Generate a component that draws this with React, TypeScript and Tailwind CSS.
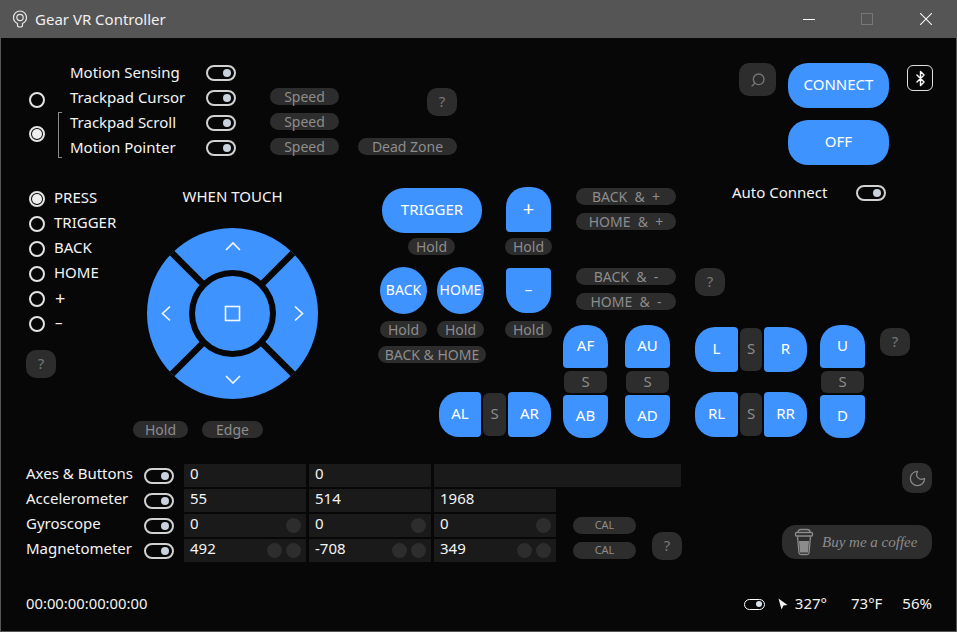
import { Bluetooth, Moon, Search } from 'lucide-react'
import type { ReactNode } from 'react'

const blue = 'bg-[#3f93ff] text-white flex items-center justify-center shrink-0 pb-[2px]'
const pill = 'bg-[#2d2d2d] text-[#8c8c8c] flex items-center justify-center rounded-full h-[17px] text-[14px] whitespace-pre shrink-0 pb-px'
const helpBtn = 'bg-[#2d2d2d] text-[#777] flex items-center justify-center rounded-[10px] w-[30px] h-[28px] text-[15px] shrink-0 pb-[2px]'
const sBtn = 'bg-[#2d2d2d] text-[#8c8c8c] rounded-[6px] flex items-center justify-center pb-[2px]'

function Toggle() {
  return (
    <div className="w-[30px] h-[16px] rounded-full border-2 border-[#d2d2d2] flex items-center justify-end pr-[3px] shrink-0">
      <div className="w-[8px] h-[8px] rounded-full bg-[#c9d2dc]" />
    </div>
  )
}

function Radio({ on }: { on?: boolean }) {
  return (
    <div className="w-[16px] h-[16px] rounded-full border-2 border-[#e4e4e4] flex items-center justify-center shrink-0">
      {on && <div className="w-[10px] h-[10px] rounded-full bg-[#eeeeee]" />}
    </div>
  )
}

function Dpad() {
  return (
    <svg width="171" height="171" viewBox="0 0 171 171" className="block">
      <circle cx="85.5" cy="85.5" r="85.5" fill="#3f93ff" />
      <path d="M25 25 L146 146 M146 25 L25 146" stroke="#070707" strokeWidth="6.5" />
      <circle cx="85.5" cy="85.5" r="43.5" fill="#070707" />
      <circle cx="85.5" cy="85.5" r="37.5" fill="#3f93ff" />
      <g fill="none" stroke="#f4f8ff" strokeWidth="1.6">
        <path d="M79 22 L86 15 L93 22" />
        <path d="M79 148 L86 155 L93 148" />
        <path d="M23 78.5 L15.5 85.5 L23 92.5" />
        <path d="M148 78.5 L155.5 85.5 L148 92.5" />
        <rect x="78.5" y="78.5" width="14" height="14" />
      </g>
    </svg>
  )
}

function Bulb() {
  return (
    <svg width="16" height="18" viewBox="0 0 16 18" fill="none" stroke="#e6e6e6" strokeWidth="1.2" className="shrink-0">
      <path d="M5.5 13.5 C3 12.2 1.5 10 1.5 7.5 A6.5 6.5 0 0 1 14.5 7.5 C14.5 10 13 12.2 10.5 13.5 L10.5 15.5 Q10.5 17 8 17 Q5.5 17 5.5 15.5 Z" />
      <circle cx="8" cy="7.5" r="3.2" />
    </svg>
  )
}

function CoffeeCup() {
  return (
    <svg width="20" height="28" viewBox="0 0 20 28" fill="none" stroke="#8c8c8c" strokeWidth="1.3" className="shrink-0">
      <path d="M4 4 Q4 1.5 7 1.5 L13 1.5 Q16 1.5 16 4" />
      <rect x="1.5" y="4.5" width="17" height="3.5" rx="1" />
      <path d="M3.5 8.5 L5 25 Q5.2 26.5 7 26.5 L13 26.5 Q14.8 26.5 15 25 L16.5 8.5" />
      <path d="M5 13 L15 13 L14 24.5 L6 24.5 Z" fill="#8c8c8c" stroke="none" />
    </svg>
  )
}

function MotionRow({ label, children }: { label: string; children?: ReactNode }) {
  return (
    <div className="flex items-center h-[25px]">
      <span className="w-[136px]">{label}</span>
      <Toggle />
      {children}
    </div>
  )
}

function Cell({ value, dots = 0, wide }: { value: string; dots?: number; wide?: boolean }) {
  return (
    <div className={`bg-[#1a1a1a] h-[23px] flex items-center pl-[6px] pr-[5px] gap-[4px] ${wide ? 'w-[247px]' : 'w-[122px]'}`}>
      <span className="mr-auto pb-[4px]">{value}</span>
      {dots > 1 && <div className="w-[15px] h-[15px] rounded-full bg-[#2d2d2d]" />}
      {dots > 0 && <div className="w-[15px] h-[15px] rounded-full bg-[#2d2d2d]" />}
    </div>
  )
}

function SensorRow({ label, children }: { label: string; children: ReactNode }) {
  return (
    <div className="flex items-center h-[23px]">
      <span className="w-[118px] pb-[4px]">{label}</span>
      <Toggle />
      <div className="flex gap-[3px] ml-[10px]">{children}</div>
    </div>
  )
}

export default function App() {
  return (
    <div className="w-[957px] h-[632px] flex flex-col overflow-hidden bg-[#070707] text-[#f4f4f4] text-[15px] font-['Noto_Sans',sans-serif]">
      {/* Title bar */}
      <div className="h-[38px] bg-[#555555] flex items-center shrink-0">
        <div className="ml-[12px] mr-[7px]"><Bulb /></div>
        <span className="text-[#f0f0f0]">Gear VR Controller</span>
        <div className="ml-auto flex items-center mr-[25px]">
          <div className="w-[12px] h-px bg-white" />
          <div className="w-[12px] h-[12px] border border-[#777] ml-[46px]" />
          <svg width="12" height="12" viewBox="0 0 12 12" stroke="#f4f4f4" strokeWidth="1.1" className="ml-[47px]">
            <path d="M0 0 L12 12 M12 0 L0 12" />
          </svg>
        </div>
      </div>

      <div className="flex-1 flex flex-col border-x border-b border-[#555555] pl-[25px] pt-[22px]">
        <div className="flex">
          {/* Main column */}
          <div className="w-[655px] flex flex-col shrink-0">
            {/* Mode switches */}
            <div className="flex h-[100px]">
              <div className="w-[32px] flex flex-col">
                <div className="h-[25px]" />
                <div className="h-[25px] flex items-center pl-[3px] pt-[4px]"><Radio /></div>
                <div className="h-[50px] flex items-center pl-[3px] pb-[2px]"><Radio on /></div>
              </div>
              <div className="w-[12px] flex flex-col">
                <div className="h-[52px]" />
                <div className="w-[4px] h-[46px] border-y border-l border-[#8a8a8a]" />
              </div>
              <div className="flex flex-col">
                <MotionRow label="Motion Sensing" />
                <MotionRow label="Trackpad Cursor">
                  <div className={`${pill} w-[69px] ml-[34px] -mt-[2px]`}>Speed</div>
                  <div className={`${helpBtn} ml-[88px] mt-[9px]`}>?</div>
                </MotionRow>
                <MotionRow label="Trackpad Scroll">
                  <div className={`${pill} w-[69px] ml-[34px] -mt-[2px]`}>Speed</div>
                </MotionRow>
                <MotionRow label="Motion Pointer">
                  <div className={`${pill} w-[69px] ml-[34px] -mt-[2px]`}>Speed</div>
                  <div className={`${pill} w-[99px] ml-[19px] -mt-[2px]`}>Dead Zone</div>
                </MotionRow>
              </div>
            </div>

            {/* Controller area */}
            <div className="flex mt-[27px]">
              <div className="w-[107px] shrink-0 -mt-px flex flex-col">
                {['PRESS', 'TRIGGER', 'BACK', 'HOME', '+', '–'].map((label, i) => (
                  <div key={label} className="h-[25px] flex items-center pl-[3px]">
                    <Radio on={i === 0} />
                    <span className={`ml-[9px] pb-[2px] ${i === 4 ? 'pl-[1px] text-[18px] leading-[20px]' : ''} ${i === 5 ? 'pl-[1px]' : ''}`}>{label}</span>
                  </div>
                ))}
                <div className={`${helpBtn} mt-[14px]`}>?</div>
              </div>

              <div className="w-[185px] shrink-0 flex flex-col">
                <div className="w-[171px] ml-[14px] h-[20px] flex items-center justify-center pb-[2px]">WHEN TOUCH</div>
                <div className="ml-[14px] mt-[21px]"><Dpad /></div>
                <div className="flex gap-[14px] mt-[22px]">
                  <div className={`${pill} w-[55px]`}>Hold</div>
                  <div className={`${pill} w-[61px]`}>Edge</div>
                </div>
              </div>

              {/* Button map */}
              <div className="ml-[60px] w-[178px] shrink-0 flex flex-col">
                <div className="flex">
                  <div className="w-[110px] flex flex-col shrink-0">
                    <div className={`${blue} w-[100px] h-[45px] ml-[4px] mt-px rounded-[22px]`}>TRIGGER</div>
                    <div className={`${pill} w-[47px] ml-[30px] mt-[5px]`}>Hold</div>
                    <div className="flex gap-[10px] ml-[2px] mt-[12px]">
                      <div className={`${blue} w-[47px] h-[47px] rounded-full text-[14px]`}>BACK</div>
                      <div className={`${blue} w-[47px] h-[47px] rounded-full text-[14px]`}>HOME</div>
                    </div>
                    <div className="flex gap-[10px] ml-[2px] mt-[7px]">
                      <div className={`${pill} w-[47px]`}>Hold</div>
                      <div className={`${pill} w-[47px]`}>Hold</div>
                    </div>
                    <div className={`${pill} w-[108px] mt-[8px]`}>BACK &amp; HOME</div>
                  </div>
                  <div className="flex flex-col ml-[17px]">
                    <div className={`${blue} w-[45px] h-[45px] ml-px rounded-t-[20px] rounded-b-[4px] text-[20px]`}>+</div>
                    <div className={`${pill} w-[47px] mt-[6px]`}>Hold</div>
                    <div className={`${blue} w-[45px] h-[45px] ml-px mt-[13px] rounded-t-[4px] rounded-b-[20px]`}>–</div>
                    <div className={`${pill} w-[47px] mt-[8px]`}>Hold</div>
                  </div>
                </div>
                <div className="flex ml-[61px] mt-[29px] gap-[2px]">
                  <div className={`${blue} w-[42px] h-[45px] rounded-l-[20px] rounded-r-[4px]`}>AL</div>
                  <div className={`${sBtn} w-[23px] h-[43px] my-px`}>S</div>
                  <div className={`${blue} w-[43px] h-[45px] rounded-r-[20px] rounded-l-[4px]`}>AR</div>
                </div>
              </div>

              <div className="flex flex-col w-[125px] shrink-0">
                <div className={`${pill} w-[100px] ml-[20px] mt-px`}>BACK  &amp;  +</div>
                <div className={`${pill} w-[100px] ml-[20px] mt-[8px]`}>HOME  &amp;  +</div>
                <div className={`${pill} w-[100px] ml-[20px] mt-[38px]`}>BACK  &amp;  -</div>
                <div className={`${pill} w-[100px] ml-[20px] mt-[8px]`}>HOME  &amp;  -</div>
                <div className="flex ml-[7px] mt-[15px] gap-[17px]">
                  {[['AF', 'AB'], ['AU', 'AD']].map(([top, bottom]) => (
                    <div key={top} className="flex flex-col w-[45px]">
                      <div className={`${blue} h-[43px] rounded-t-[20px] rounded-b-[4px]`}>{top}</div>
                      <div className={`${sBtn} h-[22px] mx-px mt-[3px]`}>S</div>
                      <div className={`${blue} h-[43px] mt-[2px] rounded-b-[20px] rounded-t-[4px]`}>{bottom}</div>
                    </div>
                  ))}
                </div>
              </div>
            </div>

            {/* Sensors */}
            <div className="flex mt-[26px]">
              <div className="flex flex-col gap-[2px]">
                <SensorRow label="Axes & Buttons">
                  <Cell value="0" />
                  <Cell value="0" />
                  <Cell value="" wide />
                </SensorRow>
                <SensorRow label="Accelerometer">
                  <Cell value="55" />
                  <Cell value="514" />
                  <Cell value="1968" />
                </SensorRow>
                <SensorRow label="Gyroscope">
                  <Cell value="0" dots={1} />
                  <Cell value="0" dots={1} />
                  <Cell value="0" dots={1} />
                </SensorRow>
                <SensorRow label="Magnetometer">
                  <Cell value="492" dots={2} />
                  <Cell value="-708" dots={2} />
                  <Cell value="349" dots={2} />
                </SensorRow>
              </div>
              <div className="-ml-[108px] flex flex-col gap-[8px] pt-[53px]">
                <div className="bg-[#2d2d2d] text-[#8c8c8c] flex items-center justify-center rounded-full h-[17px] w-[63px] text-[11px] pb-px">CAL</div>
                <div className="bg-[#2d2d2d] text-[#8c8c8c] flex items-center justify-center rounded-full h-[17px] w-[63px] text-[11px] pb-px">CAL</div>
              </div>
              <div className={`${helpBtn} ml-[16px] mt-[68px]`}>?</div>
            </div>
          </div>

          {/* Right column */}
          <div className="w-[238px] ml-[14px] shrink-0 flex flex-col pt-[3px]">
            <div className="flex">
              <div className="ml-[44px] w-[37px] h-[33px] rounded-[10px] bg-[#2d2d2d] flex items-center justify-center">
                <Search size={16} color="#777" className="-scale-x-100" />
              </div>
              <div className="ml-[12px] flex flex-col gap-[12px]">
                <div className={`${blue} w-[101px] h-[45px] rounded-[20px]`}>CONNECT</div>
                <div className={`${blue} w-[101px] h-[45px] rounded-[20px]`}>OFF</div>
              </div>
              <div className="ml-[18px] mt-[2px] w-[26px] h-[26px] rounded-[6px] border-[1.5px] border-[#e0e0e0] flex items-center justify-center">
                <Bluetooth size={17} color="#fff" />
              </div>
            </div>
            <div className="flex items-center h-[16px] mt-[20px] ml-[37px]">
              <span className="w-[124px] pb-[2px]">Auto Connect</span>
              <Toggle />
            </div>
            <div className={`${helpBtn} mt-[67px]`}>?</div>
            <div className="flex mt-[29px]">
              <div className="flex flex-col gap-[20px] pt-[2px]">
                {[['L', 'R'], ['RL', 'RR']].map(([left, right]) => (
                  <div key={left} className="flex gap-[2px]">
                    <div className={`${blue} w-[43px] h-[45px] rounded-l-[20px] rounded-r-[4px]`}>{left}</div>
                    <div className={`${sBtn} w-[22px] h-[43px] my-px`}>S</div>
                    <div className={`${blue} w-[43px] h-[45px] rounded-r-[20px] rounded-l-[4px]`}>{right}</div>
                  </div>
                ))}
              </div>
              <div className="flex flex-col w-[45px] ml-[13px]">
                <div className={`${blue} h-[43px] rounded-t-[20px] rounded-b-[4px]`}>U</div>
                <div className={`${sBtn} h-[22px] mx-px mt-[3px]`}>S</div>
                <div className={`${blue} h-[43px] mt-[2px] rounded-b-[20px] rounded-t-[4px]`}>D</div>
              </div>
              <div className={`${helpBtn} ml-[15px] mt-[3px]`}>?</div>
            </div>
            <div className="ml-[207px] mt-[25px] w-[30px] h-[30px] rounded-[10px] bg-[#2d2d2d] flex items-center justify-center">
              <Moon size={19} color="#8a8a8a" strokeWidth={1.5} />
            </div>
            <div className="ml-[87px] mt-[32px] w-[150px] h-[34px] rounded-[14px] bg-[#2d2d2d] flex items-center pl-[12px] gap-[8px]">
              <CoffeeCup />
              <span className="text-[#8c8c8c] text-[15px] italic font-['Liberation_Serif',serif]">Buy me a coffee</span>
            </div>
          </div>
        </div>

        {/* Status bar */}
        <div className="flex items-center mt-[30px]">
          <span className="pb-[2px] text-[14.8px]">00:00:00:00:00:00</span>
          <div className="ml-auto flex items-center mr-[24px]">
            <div className="w-[21px] h-[11px] rounded-full border-[1.5px] border-white flex items-center justify-end pr-[2px]">
              <div className="w-[6px] h-[6px] rounded-full bg-[#d8e0e8]" />
            </div>
            <svg width="10" height="12" viewBox="0 0 10 12" className="ml-[13px]">
              <path d="M0.5 0.5 L9.5 7 L5.5 7.5 L3.5 11.5 Z" fill="#f0f0f0" />
            </svg>
            <span className="ml-[7px] pb-[2px]">327°</span>
            <span className="ml-[24px] pb-[2px]">73°F</span>
            <span className="ml-[20px] pb-[2px]">56%</span>
          </div>
        </div>
      </div>
    </div>
  )
}
